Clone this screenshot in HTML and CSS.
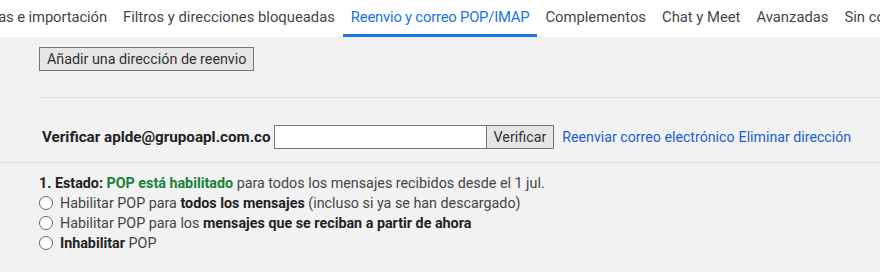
FILE: index.html
```html
<!DOCTYPE html>
<html lang="es">
<head>
<meta charset="utf-8">
<link rel="stylesheet" href="styles.css">
</head>
<body>
<div class="tabbar">
<nav class="tabs">
  <a class="tab">Cuentas e importación</a>
  <a class="tab">Filtros y direcciones bloqueadas</a>
  <a class="tab active">Reenvio y correo POP/IMAP</a>
  <a class="tab">Complementos</a>
  <a class="tab">Chat y Meet</a>
  <a class="tab">Avanzadas</a>
  <a class="tab">Sin conexión</a>
</nav>
</div>
<main class="content">
  <section class="forward">
    <button class="btn add">Añadir una dirección de reenvio</button>
    <hr class="sep inner">
    <div class="verify">
      <span class="verify-label">Verificar aplde@grupoapl.com.co</span>
      <input class="code" type="text">
      <button class="btn check">Verificar</button>
      <a class="link">Reenviar correo electrónico</a>
      <a class="link">Eliminar dirección</a>
    </div>
  </section>
  <hr class="sep full">
  <section class="pop">
    <div class="status"><b>1. Estado:</b> <b class="ok">POP está habilitado</b> para todos los mensajes recibidos desde el 1 jul.</div>
    <label class="opt"><span class="radio"></span><span>Habilitar POP para <b>todos los mensajes</b> (incluso si ya se han descargado)</span></label>
    <label class="opt"><span class="radio"></span><span>Habilitar POP para los <b>mensajes que se reciban a partir de ahora</b></span></label>
    <label class="opt"><span class="radio"></span><span><b>Inhabilitar</b> POP</span></label>
  </section>
</main>
</body>
</html>
```
FILE: styles.css
```css
* { box-sizing: border-box; }
html, body { margin: 0; padding: 0; }
body {
  width: 880px;
  height: 272px;
  overflow: hidden;
  background: #f2f2f2;
  font-family: Roboto, "Open Sans", sans-serif;
  color: #222;
}
.tabbar {
  height: 37px;
  background: #fff;
  overflow: hidden;
}
.tabs {
  display: flex;
  height: 37px;
  margin-left: -48px;
  white-space: nowrap;
}
.tab {
  padding: 0 8px;
  font-size: 14.8px;
  line-height: 34px;
  color: #444746;
  border-bottom: 3px solid transparent;
}
.tab:first-child { letter-spacing: -0.1px; }
.tab.active {
  color: #1a73e8;
  border-bottom-color: #1a73e8;
  letter-spacing: -0.2px;
}
.content { padding-top: 10px; }
.forward { padding-left: 39px; }
.btn {
  font-family: inherit;
  font-size: 14.3px;
  color: #333;
  background: #e6e6e6;
  border: 1px solid #767676;
  border-radius: 0;
  padding: 0 7px;
  height: 24px;
}
.add { display: block; }
.sep { border: 0; border-top: 1px solid #e2e2e2; margin: 0; }
.sep.inner { margin: 26px 0 27px 1px; }
.verify {
  display: flex;
  align-items: center;
  padding-left: 3px;
  height: 24px;
  font-size: 14.3px;
}
.verify-label { font-weight: 700; font-size: 15.2px; color: #222; margin-right: 3px; }
.code {
  width: 213px;
  height: 24px;
  border: 1px solid #767676;
  background: #fff;
  margin: 0;
}
.check { height: 24px; margin-right: 8px; border-left: 0; }
.link { color: #1a5fd0; font-size: 14.2px; margin-right: 4px; }
.sep.full { margin-top: 13px; }
.pop { padding: 11px 0 0 39px; font-size: 14.3px; color: #444; }
.status { line-height: 19px; }
.status b { color: #222; }
.status .ok { color: #188038; }
.opt { display: flex; align-items: center; height: 20px; }
.opt b { color: #222; }
.radio {
  width: 14px;
  height: 14px;
  border: 1px solid #666;
  border-radius: 50%;
  background: #fff;
  margin-right: 7px;
  flex: none;
}
```
